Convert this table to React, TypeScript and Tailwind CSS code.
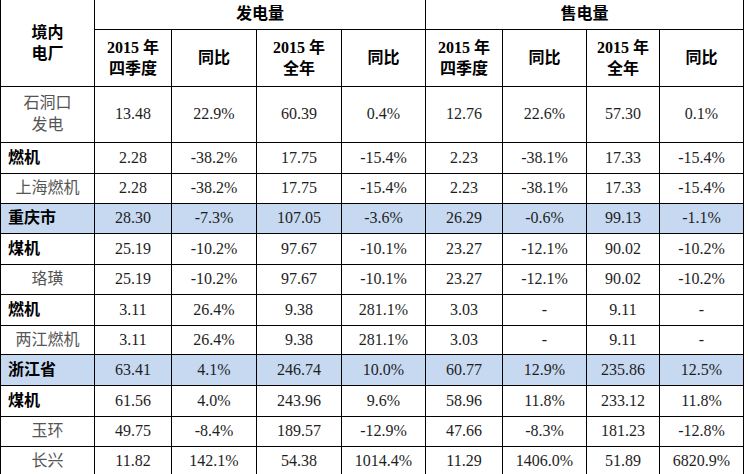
import React from "react";

type Row = { name: string; bold?: boolean; blue?: boolean; h: number; vals: string[] };

const rows: Row[] = [
  { name: "石洞口\n发电", h: 56, vals: ["13.48", "22.9%", "60.39", "0.4%", "12.76", "22.6%", "57.30", "0.1%"] },
  { name: "燃机", bold: true, h: 31, vals: ["2.28", "-38.2%", "17.75", "-15.4%", "2.23", "-38.1%", "17.33", "-15.4%"] },
  { name: "上海燃机", h: 30, vals: ["2.28", "-38.2%", "17.75", "-15.4%", "2.23", "-38.1%", "17.33", "-15.4%"] },
  { name: "重庆市", bold: true, blue: true, h: 30, vals: ["28.30", "-7.3%", "107.05", "-3.6%", "26.29", "-0.6%", "99.13", "-1.1%"] },
  { name: "煤机", bold: true, h: 31, vals: ["25.19", "-10.2%", "97.67", "-10.1%", "23.27", "-12.1%", "90.02", "-10.2%"] },
  { name: "珞璜", h: 30, vals: ["25.19", "-10.2%", "97.67", "-10.1%", "23.27", "-12.1%", "90.02", "-10.2%"] },
  { name: "燃机", bold: true, h: 31, vals: ["3.11", "26.4%", "9.38", "281.1%", "3.03", "-", "9.11", "-"] },
  { name: "两江燃机", h: 29, vals: ["3.11", "26.4%", "9.38", "281.1%", "3.03", "-", "9.11", "-"] },
  { name: "浙江省", bold: true, blue: true, h: 31, vals: ["63.41", "4.1%", "246.74", "10.0%", "60.77", "12.9%", "235.86", "12.5%"] },
  { name: "煤机", bold: true, h: 31, vals: ["61.56", "4.0%", "243.96", "9.6%", "58.96", "11.8%", "233.12", "11.8%"] },
  { name: "玉环", h: 30, vals: ["49.75", "-8.4%", "189.57", "-12.9%", "47.66", "-8.3%", "181.23", "-12.8%"] },
  { name: "长兴", h: 30, vals: ["11.82", "142.1%", "54.38", "1014.4%", "11.29", "1406.0%", "51.89", "6820.9%"] },
];

const widths = ["w-[94px]", "w-[77px]", "w-[85px]", "w-[85px]", "w-[84px]", "w-[77px]", "w-[84px]", "w-[73px]", "w-[84px]"];

const font = "font-[family-name:Liberation_Serif,Noto_Sans_CJK_SC,serif]";
const boldCjk = "font-[family-name:Liberation_Serif,Noto_Sans_CJK_SC,sans-serif] font-bold";

export default function App() {
  return (
    <div className={`w-[748px] h-[474px] overflow-hidden bg-white ${font} text-[16px] text-[#1e1e1e]`}>
      <table className="table-fixed border-collapse w-[744px]">
        <colgroup>
          {widths.map((w, i) => (
            <col key={i} className={w} />
          ))}
        </colgroup>
        <thead>
          <tr className="h-[29px]">
            <th rowSpan={2} className={`border border-t-0 border-black text-center align-middle leading-[21px] text-[16px] ${boldCjk} text-black`}>
              境内
              <br />
              电厂
            </th>
            <th colSpan={4} className={`border border-t-0 border-black text-center ${boldCjk} text-[16px] text-black`}>
              发电量
            </th>
            <th colSpan={4} className={`border border-t-0 border-black text-center ${boldCjk} text-[16px] text-black`}>
              售电量
            </th>
          </tr>
          <tr className="h-[57px]">
            {["2015 年\n四季度", "同比", "2015 年\n全年", "同比", "2015 年\n四季度", "同比", "2015 年\n全年", "同比"].map((t, i) => (
              <th key={i} className={`border border-black text-center align-middle leading-[21px] text-[16px] ${boldCjk} text-black whitespace-pre-line`}>
                {t}
              </th>
            ))}
          </tr>
        </thead>
        <tbody>
          {rows.map((r, ri) => (
            <tr key={ri} style={{ height: r.h }} className={r.blue ? "bg-[#c6d9f1]" : ""}>
              <td
                className={`border border-black align-middle whitespace-pre-line ${
                  r.bold ? `text-left pl-[7px] ${boldCjk} text-[16px] text-black` : "text-center text-[#555555] leading-[22px]"
                }`}
              >
                {r.name}
              </td>
              {r.vals.map((v, vi) => (
                <td key={vi} className="border border-black text-center align-middle text-[#1e1e1e] text-[16px]">
                  {v}
                </td>
              ))}
            </tr>
          ))}
        </tbody>
      </table>
    </div>
  );
}
